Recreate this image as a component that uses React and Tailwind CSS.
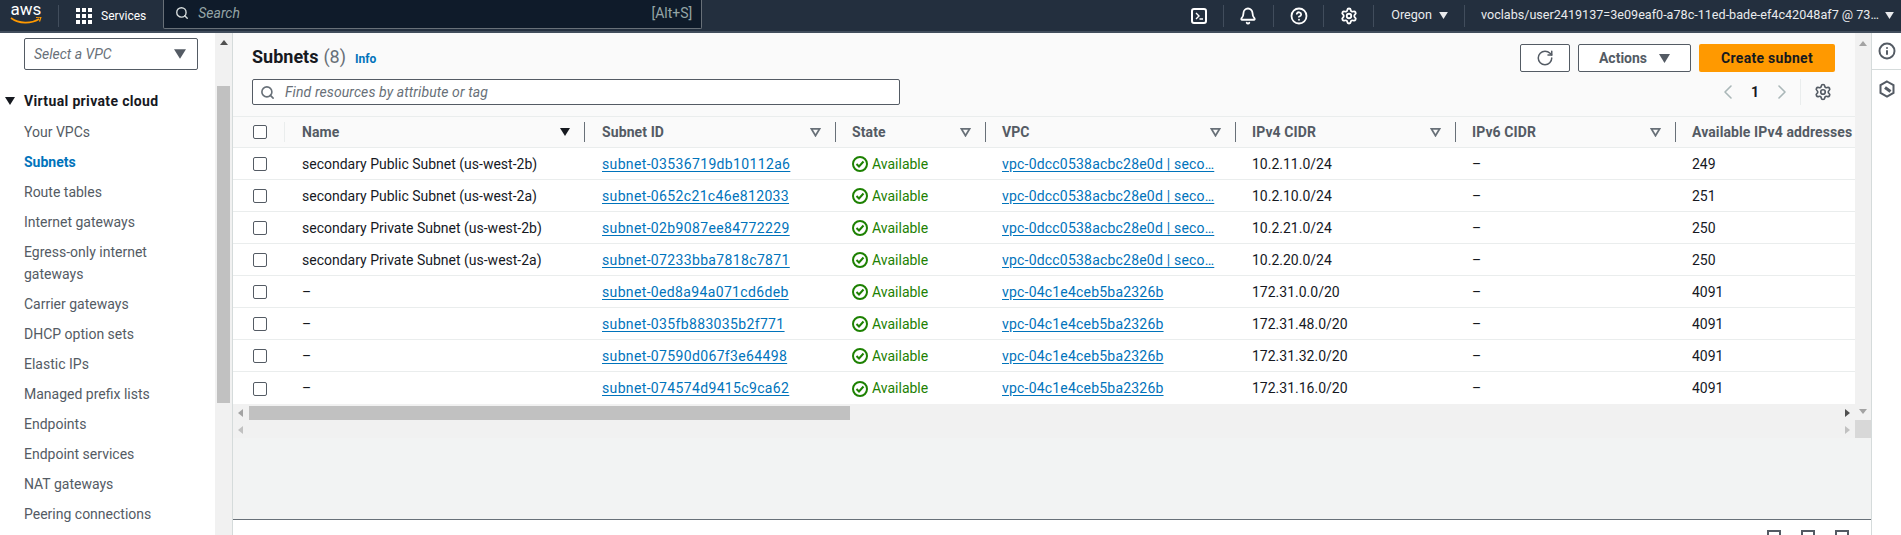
import { ChevronLeft, ChevronRight, RotateCw, Search, Settings, Bell, CircleHelp, Info } from "lucide-react";

const rowGrid = "grid grid-cols-[52px_300px_251px_150px_250px_220px_220px_179px]";

const rows = [
  ["secondary Public Subnet (us-west-2b)", "subnet-03536719db10112a6", "vpc-0dcc0538acbc28e0d | seco…", "10.2.11.0/24", "249"],
  ["secondary Public Subnet (us-west-2a)", "subnet-0652c21c46e812033", "vpc-0dcc0538acbc28e0d | seco…", "10.2.10.0/24", "251"],
  ["secondary Private Subnet (us-west-2b)", "subnet-02b9087ee84772229", "vpc-0dcc0538acbc28e0d | seco…", "10.2.21.0/24", "250"],
  ["secondary Private Subnet (us-west-2a)", "subnet-07233bba7818c7871", "vpc-0dcc0538acbc28e0d | seco…", "10.2.20.0/24", "250"],
  ["–", "subnet-0ed8a94a071cd6deb", "vpc-04c1e4ceb5ba2326b", "172.31.0.0/20", "4091"],
  ["–", "subnet-035fb883035b2f771", "vpc-04c1e4ceb5ba2326b", "172.31.48.0/20", "4091"],
  ["–", "subnet-07590d067f3e64498", "vpc-04c1e4ceb5ba2326b", "172.31.32.0/20", "4091"],
  ["–", "subnet-074574d9415c9ca62", "vpc-04c1e4ceb5ba2326b", "172.31.16.0/20", "4091"],
];

const navLinks = [
  "Your VPCs",
  "Subnets",
  "Route tables",
  "Internet gateways",
  "Egress-only internet gateways",
  "Carrier gateways",
  "DHCP option sets",
  "Elastic IPs",
  "Managed prefix lists",
  "Endpoints",
  "Endpoint services",
  "NAT gateways",
  "Peering connections",
];

const Caret = ({ className }) => (
  <svg viewBox="0 0 10 8" className={className}>
    <path d="M0 0h10L5 8z" fill="currentColor" />
  </svg>
);

const SortIcon = () => (
  <svg viewBox="0 0 12 10" className="w-[11px] h-[9px] text-[#687078]">
    <path d="M1.5 1h9L6 8.5z" fill="none" stroke="currentColor" strokeWidth="2" />
  </svg>
);

const Checkbox = () => (
  <div className="w-[14px] h-[14px] rounded-[2px] border border-[#545b64] bg-white" />
);

const Available = () => (
  <div className="flex items-center gap-[4px] text-[#1d8102]">
    <svg viewBox="0 0 16 16" className="w-[16px] h-[16px]" fill="none" stroke="currentColor" strokeWidth="2">
      <circle cx="8" cy="8" r="7" />
      <path d="M4.500 8l2.500 2.500 4.500-5" />
    </svg>
    <span>Available</span>
  </div>
);

const HeaderCell = ({ label, sorted, last, wide }) => (
  <div className={`flex items-center justify-between h-full ${wide ? "pl-[17px]" : "pl-[16px]"}`}>
    <span className="font-bold text-[#545b64] tracking-[0.1px] whitespace-nowrap">{label}</span>
    {!last && (
      <div className="flex items-center gap-[14px]">
        {sorted ? <Caret className="w-[10px] h-[8px] text-[#16191f]" /> : <SortIcon />}
        <div className="w-px h-[20px] bg-[#687078]" />
      </div>
    )}
  </div>
);

const TopNav = () => (
  <header className="flex items-center h-[33px] bg-[#232f3e] border-b-2 border-[#414d5c] text-[12.6px] text-[#e9ebed]">
    <div className="flex flex-col items-center w-[32px] ml-[10px] h-[26px] -mt-[3px]">
      <span className="text-[17px] leading-[17px] text-white font-normal">aws</span>
      <svg viewBox="0 0 32 8" className="w-[32px] h-[8px] -mt-[1px]">
        <path d="M1 1c8 6 20 6 28 1" fill="none" stroke="#ff9900" strokeWidth="1.6" />
        <path d="M26 0.500l5-.5-1.500 4.500" fill="none" stroke="#ff9900" strokeWidth="1.2" />
      </svg>
    </div>
    <div className="w-px h-[22px] bg-[#414d5c] ml-[16px]" />
    <div className="grid grid-cols-3 gap-[2px] ml-[17px]">
      {Array.from({ length: 9 }).map((_, i) => (
        <div key={i} className="w-[4px] h-[4px] bg-white" />
      ))}
    </div>
    <span className="ml-[9px] text-white text-[12px]">Services</span>
    <div className="flex items-center shrink-0 h-[31px] w-[539px] ml-[17px] -mt-[4px] bg-[#0f1b2a] border border-t-0 border-[#687078] rounded-b-[2px] text-[14px]">
      <Search className="w-[14px] h-[14px] ml-[11px] text-[#d5dbdb]" strokeWidth={2.4} />
      <span className="ml-[9px] italic text-[#95a5a6]">Search</span>
      <span className="ml-auto mr-[9px] text-[#95a5a6]">[Alt+S]</span>
    </div>
    <div className="flex items-center ml-[489px]">
      <div className="w-[16px] h-[16px] rounded-[3px] border-2 border-white flex items-center justify-center">
        <svg viewBox="0 0 10 10" className="w-[10px] h-[10px]">
          <path d="M2 2l3 3-3 3M5.500 8H9" fill="none" stroke="white" strokeWidth="1.4" />
        </svg>
      </div>
      <div className="w-px h-[22px] bg-[#414d5c] ml-[16px]" />
      <Bell className="w-[18px] h-[18px] ml-[15px] text-white" strokeWidth={2.4} />
      <div className="w-px h-[22px] bg-[#414d5c] ml-[16px]" />
      <CircleHelp className="w-[18px] h-[18px] ml-[16px] text-white" strokeWidth={2.4} />
      <div className="w-px h-[22px] bg-[#414d5c] ml-[15px]" />
      <Settings className="w-[18px] h-[18px] ml-[16px] text-white" strokeWidth={2.4} />
      <div className="w-px h-[22px] bg-[#414d5c] ml-[15px]" />
      <span className="ml-[17px]">Oregon</span>
      <Caret className="w-[9px] h-[7px] ml-[7px] text-[#e9ebed]" />
      <div className="w-px h-[22px] bg-[#414d5c] ml-[16px]" />
      <span className="ml-[16px] whitespace-nowrap">voclabs/user2419137=3e09eaf0-a78c-11ed-bade-ef4c42048af7 @ 73…</span>
      <Caret className="w-[9px] h-[7px] ml-[6px] text-[#e9ebed]" />
    </div>
  </header>
);

const Sidebar = () => (
  <aside className="flex w-[233px] h-full border-r border-[#d5dbdb] bg-white">
    <div className="w-[215px] pl-[24px] pr-[17px] pt-[5px]">
      <div className="flex items-center justify-between h-[32px] pl-[9px] pr-[11px] border border-[#545b64] rounded-[2px] italic text-[14px] text-[#687078]">
        <span>Select a VPC</span>
        <Caret className="w-[12px] h-[10px] text-[#545b64]" />
      </div>
      <div className="flex items-center gap-[9px] -ml-[19px] mt-[20px] h-[22px] font-bold text-[14px] tracking-[0.35px] text-[#16191f]">
        <Caret className="w-[10px] h-[8px] text-[#16191f]" />
        <span>Virtual private cloud</span>
      </div>
      <nav className="flex flex-col gap-[8px] mt-[9px] text-[14px] leading-[22px] text-[#545b64]">
        {navLinks.map((link) => (
          <a key={link} className={link === "Subnets" ? "font-bold text-[#0073bb]" : ""}>{link}</a>
        ))}
      </nav>
    </div>
    <div className="w-[17px] bg-[#f1f1f1] pl-[2px]">
      <div className="flex justify-center w-[13px] pt-[7px]">
        <svg viewBox="0 0 8 5" className="w-[8px] h-[5px]"><path d="M0 5h8L4 0z" fill="#505050" /></svg>
      </div>
      <div className="w-[13px] h-[317px] mt-[41px] bg-[#c1c1c1]" />
    </div>
  </aside>
);

const HScrollBar = ({ active }) => (
  <div className="flex items-center h-[17px] bg-[#f1f1f1]">
    <svg viewBox="0 0 5 8" className="w-[5px] h-[8px] ml-[5px] shrink-0">
      <path d="M5 0v8L0 4z" fill={active ? "#a3a3a3" : "#c1c1c1"} />
    </svg>
    {active && <div className="w-[601px] h-[14px] ml-[6px] bg-[#c1c1c1]" />}
    <svg viewBox="0 0 5 8" className="w-[5px] h-[8px] ml-auto mr-[5px] shrink-0">
      <path d="M0 0v8l5-4z" fill={active ? "#505050" : "#c1c1c1"} />
    </svg>
  </div>
);

const Content = () => (
  <div className="flex-1 min-w-0 flex flex-col">
    <div className="h-[83px] bg-[#fafafa] pl-[19px] pr-[20px]">
      <div className="flex items-start">
        <div className="flex items-baseline mt-[13px]">
          <h1 className="text-[18px] leading-[22px] font-bold text-[#16191f]">Subnets</h1>
          <span className="ml-[5px] text-[18px] leading-[22px] text-[#687078]">(8)</span>
          <a className="ml-[9px] text-[12px] font-bold text-[#0073bb]">Info</a>
        </div>
        <div className="flex ml-auto mt-[11px] gap-[8px] font-bold text-[14px]">
          <button className="flex items-center justify-center w-[50px] h-[28px] bg-white border border-[#545b64] rounded-[2px] text-[#545b64]">
            <RotateCw className="w-[18px] h-[18px]" strokeWidth={2} />
          </button>
          <button className="flex items-center justify-center gap-[12px] w-[113px] h-[28px] bg-white border border-[#545b64] rounded-[2px] text-[#545b64]">
            Actions
            <Caret className="w-[11px] h-[9px] text-[#545b64]" />
          </button>
          <button className="w-[136px] h-[28px] bg-[#ff9900] rounded-[2px] text-[#16191f] tracking-[0.3px]">Create subnet</button>
        </div>
      </div>
      <div className="flex items-center mt-[7px] h-[26px]">
        <div className="flex items-center w-[648px] h-[26px] bg-white border border-[#545b64] rounded-[2px]">
          <Search className="w-[15px] h-[15px] ml-[7px] text-[#687078]" strokeWidth={2.6} />
          <span className="ml-[10px] italic text-[14px] tracking-[0.1px] text-[#687078]">Find resources by attribute or tag</span>
        </div>
        <div className="flex items-center ml-auto mr-[3px]">
          <ChevronLeft className="w-[24px] h-[24px] text-[#aab7b8]" strokeWidth={1.6} />
          <span className="mx-[11px] font-bold text-[14px] text-[#16191f]">1</span>
          <ChevronRight className="w-[24px] h-[24px] text-[#aab7b8]" strokeWidth={1.6} />
          <div className="w-px h-[26px] bg-[#eaeded] ml-[6px]" />
          <Settings className="w-[18px] h-[18px] ml-[13px] text-[#545b64]" strokeWidth={2.2} />
        </div>
      </div>
    </div>
    <div className="overflow-hidden text-[14px] text-[#16191f] bg-white">
      <div className={`${rowGrid} h-[32px] bg-[#fafafa] border-y border-[#eaeded]`}>
        <div className="flex items-center justify-between h-full pl-[20px]">
          <Checkbox />
          <div className="w-px h-[20px] bg-[#eaeded]" />
        </div>
        <HeaderCell label="Name" sorted wide />
        <HeaderCell label="Subnet ID" wide />
        <HeaderCell label="State" />
        <HeaderCell label="VPC" />
        <HeaderCell label="IPv4 CIDR" />
        <HeaderCell label="IPv6 CIDR" />
        <HeaderCell label="Available IPv4 addresses" last />
      </div>
      {rows.map((row, i) => (
        <div key={row[1]} className={`${rowGrid} items-center h-[32px] pt-px ${i < rows.length - 1 ? "border-b border-[#eaeded]" : ""}`}>
          <div className="pl-[20px]"><Checkbox /></div>
          <div className="pl-[17px]">{row[0]}</div>
          <div className="pl-[17px]"><a className="text-[#0073bb] underline underline-offset-2 tracking-[0.35px]">{row[1]}</a></div>
          <div className="pl-[16px]"><Available /></div>
          <div className="pl-[16px]"><a className="text-[#0073bb] underline underline-offset-2 tracking-[0.2px] whitespace-nowrap">{row[2]}</a></div>
          <div className="pl-[16px]">{row[3]}</div>
          <div className="pl-[16px]">–</div>
          <div className="pl-[16px]">{row[4]}</div>
        </div>
      ))}
    </div>
    <HScrollBar active />
    <HScrollBar />
  </div>
);

const VScrollBar = () => (
  <div className="flex flex-col items-center w-[16px] bg-[#f1f1f1]">
    <svg viewBox="0 0 8 5" className="w-[8px] h-[5px] mt-[8px]"><path d="M0 5h8L4 0z" fill="#a3a3a3" /></svg>
    <svg viewBox="0 0 8 5" className="w-[8px] h-[5px] mt-auto mb-[6px]"><path d="M0 0h8L4 5z" fill="#a3a3a3" /></svg>
    <div className="w-full h-[18px] bg-[#d8d8d8]" />
  </div>
);

const RightRail = () => (
  <div className="flex flex-col w-[30px] border-l border-[#d5dbdb] bg-white">
    <div className="flex items-center justify-center h-[37px] border-b border-[#d5dbdb]">
      <Info className="w-[18px] h-[18px] text-[#545b64]" strokeWidth={2.6} />
    </div>
    <div className="flex justify-center pt-[10px]">
      <svg viewBox="0 0 18 18" className="w-[18px] h-[18px]" fill="none" stroke="#545b64" strokeWidth="2">
        <path d="M9 1.500l6.500 3.700v7.600L9 16.500l-6.500-3.700V5.200z" />
        <path d="M7 7.500l5.500 4" strokeWidth="3" />
      </svg>
    </div>
  </div>
);

const App = () => (
  <div className="flex flex-col h-[535px] overflow-hidden bg-white font-['Roboto',sans-serif]">
    <TopNav />
    <div className="flex flex-1 min-h-0">
      <Sidebar />
      <div className="flex flex-col w-[1638px]">
        <div className="flex h-[405px]">
          <Content />
          <VScrollBar />
        </div>
        <div className="flex-1 bg-[#f2f3f3]" />
        <div className="flex justify-end gap-[20px] h-[16px] pt-[10px] pr-[22px] bg-white border-t border-[#687078] overflow-hidden">
          <div className="w-[14px] h-[14px] border-2 border-[#545b64]" />
          <div className="w-[14px] h-[14px] border-2 border-[#545b64]" />
          <div className="w-[14px] h-[14px] border-2 border-[#545b64]" />
        </div>
      </div>
      <RightRail />
    </div>
  </div>
);

export default App;
